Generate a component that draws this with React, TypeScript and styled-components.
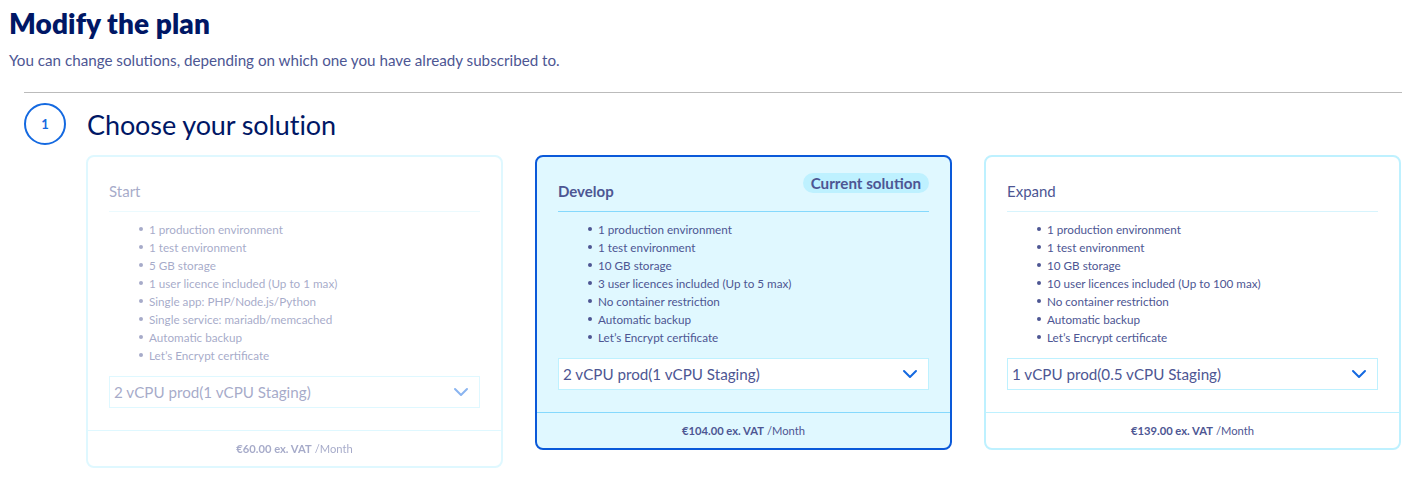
import React from "react";
import styled, { createGlobalStyle, css } from "styled-components";

const Global = createGlobalStyle`
  html, body { margin: 0; padding: 0; background: #fff; }
  body { font-family: "Lato", "Noto Sans", sans-serif; color: #4d5693; }
  * { box-sizing: border-box; }
`;

const Page = styled.div`
  padding: 5px 10px 0 9px;
`;

const Title = styled.h1`
  margin: 0;
  font-size: 28px;
  line-height: 36px;
  font-weight: 800;
  color: #001765;
  letter-spacing: 0.1px;
`;

const Subtitle = styled.p`
  margin: 9px 0 0;
  font-size: 15.2px;
  line-height: 20px;
  color: #4d5693;
`;

const Section = styled.section`
  margin: 22px 0 0 15px;
  border-top: 1px solid #bbbbbb;
  padding-top: 10px;
`;

const StepHeader = styled.div`
  display: flex;
  align-items: center;
  gap: 21px;
  height: 42px;
`;

const StepCircle = styled.div`
  width: 42px;
  height: 42px;
  border-radius: 50%;
  border: 2px solid #1469e0;
  color: #1469e0;
  font-size: 13px;
  font-weight: 700;
  display: flex;
  align-items: center;
  justify-content: center;
`;

const StepTitle = styled.h2`
  margin: 0;
  font-size: 27px;
  font-weight: 400;
  color: #001765;
  letter-spacing: -0.1px;
`;

const Cards = styled.div`
  margin: 10px 0 0 62px;
  display: grid;
  grid-template-columns: repeat(3, 417px);
  column-gap: 32px;
  align-items: start;
`;

const Card = styled.div<{ $current?: boolean; $disabled?: boolean }>`
  border: 2px solid #bef1ff;
  border-radius: 8px;
  background: #fff;
  display: flex;
  flex-direction: column;
  ${(p) =>
    p.$current &&
    css`
      border-color: #0a59d9;
      background: #e0f8ff;
    `}
  ${(p) =>
    p.$disabled &&
    css`
      opacity: 0.5;
    `}
`;

const Body = styled.div`
  padding: 0 21px 22px 21px;
`;

const Head = styled.div<{ $current?: boolean }>`
  display: flex;
  justify-content: space-between;
  align-items: flex-end;
  padding: 15px 0 8px;
  border-bottom: 1px solid ${(p) => (p.$current ? "#85d9fd" : "#d7f4fd")};
  height: 55px;
`;

const PlanName = styled.div<{ $bold?: boolean }>`
  font-size: 15px;
  line-height: 23px;
  font-weight: ${(p) => (p.$bold ? 700 : 400)};
  color: #4d5693;
`;

const Badge = styled.div`
  align-self: flex-start;
  margin-top: 1px;
  background: #bef1ff;
  color: #4d5693;
  font-weight: 700;
  font-size: 15.2px;
  line-height: 20px;
  padding: 0 8px;
  border-radius: 10px;
`;

const List = styled.ul`
  list-style: none;
  margin: 8px 0 0;
  padding: 0 0 0 40px;
`;

const Item = styled.li`
  position: relative;
  font-size: 11.7px;
  line-height: 18px;
  color: #4d5693;
  &::before {
    content: "";
    position: absolute;
    left: -10px;
    top: 7px;
    width: 4px;
    height: 4px;
    border-radius: 50%;
    background: #4d5693;
  }
`;

const Select = styled.div`
  margin-top: 12px;
  height: 32px;
  border: 1px solid #bef1ff;
  background: #fff;
  display: flex;
  align-items: center;
  justify-content: space-between;
  padding: 0 10px 0 4px;
  font-size: 15.2px;
  color: #4d5693;
`;

const Footer = styled.div<{ $current?: boolean }>`
  border-top: 1px solid ${(p) => (p.$current ? "#85d9fd" : "#bef1ff")};
  height: 36px;
  display: flex;
  align-items: center;
  justify-content: center;
  font-size: 11.2px;
  color: #4d5693;
`;

const Price = styled.b`
  font-weight: 700;
  margin-right: 3px;
`;

const Chevron = () => (
  <svg width="16" height="10" viewBox="0 0 16 10" fill="none">
    <path d="M2 2l6 6 6-6" stroke="#1469e0" strokeWidth="2" strokeLinecap="round" strokeLinejoin="round" />
  </svg>
);

type Plan = {
  name: string;
  items: string[];
  option: string;
  price: string;
  current?: boolean;
  disabled?: boolean;
};

const plans: Plan[] = [
  {
    name: "Start",
    disabled: true,
    items: [
      "1 production environment",
      "1 test environment",
      "5 GB storage",
      "1 user licence included (Up to 1 max)",
      "Single app: PHP/Node.js/Python",
      "Single service: mariadb/memcached",
      "Automatic backup",
      "Let’s Encrypt certificate",
    ],
    option: "2 vCPU prod(1 vCPU Staging)",
    price: "€60.00 ex. VAT",
  },
  {
    name: "Develop",
    current: true,
    items: [
      "1 production environment",
      "1 test environment",
      "10 GB storage",
      "3 user licences included (Up to 5 max)",
      "No container restriction",
      "Automatic backup",
      "Let’s Encrypt certificate",
    ],
    option: "2 vCPU prod(1 vCPU Staging)",
    price: "€104.00 ex. VAT",
  },
  {
    name: "Expand",
    items: [
      "1 production environment",
      "1 test environment",
      "10 GB storage",
      "10 user licences included (Up to 100 max)",
      "No container restriction",
      "Automatic backup",
      "Let’s Encrypt certificate",
    ],
    option: "1 vCPU prod(0.5 vCPU Staging)",
    price: "€139.00 ex. VAT",
  },
];

export default function App() {
  return (
    <Page>
      <Global />
      <Title>Modify the plan</Title>
      <Subtitle>You can change solutions, depending on which one you have already subscribed to.</Subtitle>
      <Section>
        <StepHeader>
          <StepCircle>1</StepCircle>
          <StepTitle>Choose your solution</StepTitle>
        </StepHeader>
        <Cards>
          {plans.map((p) => (
            <Card key={p.name} $current={p.current} $disabled={p.disabled}>
              <Body>
                <Head $current={p.current}>
                  <PlanName $bold={p.current}>{p.name}</PlanName>
                  {p.current && <Badge>Current solution</Badge>}
                </Head>
                <List>
                  {p.items.map((it) => (
                    <Item key={it}>{it}</Item>
                  ))}
                </List>
                <Select>
                  <span>{p.option}</span>
                  <Chevron />
                </Select>
              </Body>
              <Footer $current={p.current}>
                <Price>{p.price}</Price>/Month
              </Footer>
            </Card>
          ))}
        </Cards>
      </Section>
    </Page>
  );
}
